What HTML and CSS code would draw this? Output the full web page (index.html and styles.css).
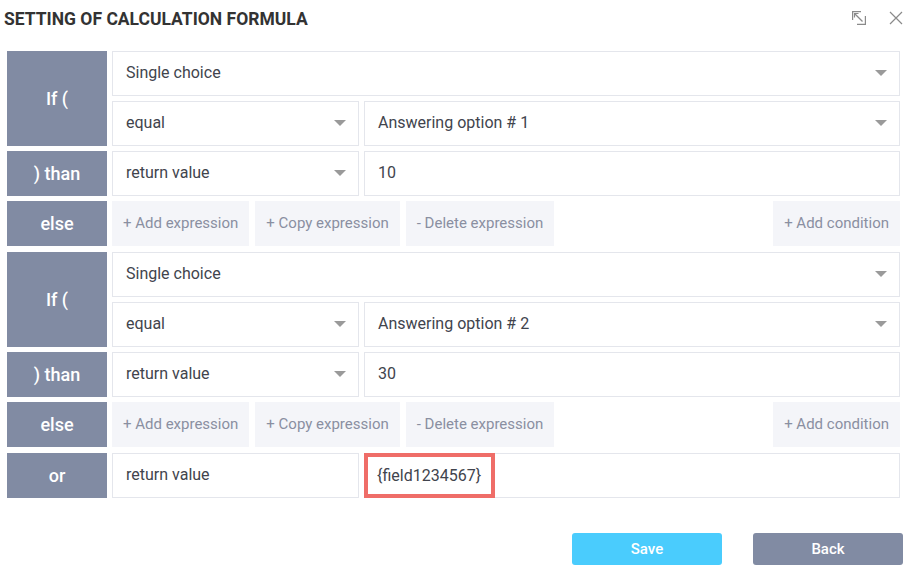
FILE: index.html
```html
<!DOCTYPE html>
<html lang="en">
<head>
    <meta charset="UTF-8">
    <title>Setting of calculation formula</title>
    <link rel="stylesheet" href="styles.css">
</head>
<body>
    <div class="dialog">
        <div class="dialog-header">
            <h1 class="dialog-title">SETTING OF CALCULATION FORMULA</h1>
            <div class="header-tools">
                <svg class="tool-icon" width="14" height="14" viewBox="0 0 14 14" fill="none" stroke="#8a8a8a" stroke-width="1.2">
                    <path d="M0.6 9V0.6H9"/>
                    <path d="M13.4 5V13.4H5"/>
                    <path d="M2.5 2.5L10.5 10.5"/>
                    <path d="M2.5 6.5V2.5H6.5"/>
                </svg>
                <svg class="tool-icon" width="14" height="14" viewBox="0 0 14 14" fill="none" stroke="#8a8a8a" stroke-width="1.2">
                    <path d="M1 1L13 13M13 1L1 13"/>
                </svg>
            </div>
        </div>

        <div class="formula">
            <!-- condition 1 -->
            <div class="group">
                <div class="row">
                    <div class="label tall">If (</div>
                    <div class="fields">
                        <div class="line"><div class="field select">Single choice</div></div>
                        <div class="line">
                            <div class="field select narrow">equal</div>
                            <div class="field select">Answering option # 1</div>
                        </div>
                    </div>
                </div>
                <div class="row">
                    <div class="label">) than</div>
                    <div class="line">
                        <div class="field select narrow">return value</div>
                        <div class="field">10</div>
                    </div>
                </div>
                <div class="row">
                    <div class="label">else</div>
                    <div class="line actions">
                        <div class="action">+ Add expression</div>
                        <div class="action">+ Copy expression</div>
                        <div class="action">- Delete expression</div>
                        <div class="action push">+ Add condition</div>
                    </div>
                </div>
            </div>

            <!-- condition 2 -->
            <div class="group">
                <div class="row">
                    <div class="label tall">If (</div>
                    <div class="fields">
                        <div class="line"><div class="field select">Single choice</div></div>
                        <div class="line">
                            <div class="field select narrow">equal</div>
                            <div class="field select">Answering option # 2</div>
                        </div>
                    </div>
                </div>
                <div class="row">
                    <div class="label">) than</div>
                    <div class="line">
                        <div class="field select narrow">return value</div>
                        <div class="field">30</div>
                    </div>
                </div>
                <div class="row">
                    <div class="label">else</div>
                    <div class="line actions">
                        <div class="action">+ Add expression</div>
                        <div class="action">+ Copy expression</div>
                        <div class="action">- Delete expression</div>
                        <div class="action push">+ Add condition</div>
                    </div>
                </div>
            </div>

            <div class="group">
                <div class="row">
                    <div class="label">or</div>
                    <div class="line">
                        <div class="field narrow">return value</div>
                        <div class="field highlighted">
                            <span class="mark">{field1234567}</span>
                        </div>
                    </div>
                </div>
            </div>
        </div>

        <div class="dialog-footer">
            <button class="btn btn-save">Save</button>
            <button class="btn btn-back">Back</button>
        </div>
    </div>
</body>
</html>
```

FILE: styles.css
```css
body {
    margin: 0;
    font-family: Roboto, "Liberation Sans", Arial, sans-serif;
    background: #ffffff;
    color: #3b3e47;
}

.dialog {
    width: 909px;
    height: 567px;
}

.dialog-header {
    display: flex;
    align-items: center;
    justify-content: space-between;
    height: 37px;
    padding: 0 6px 0 4px;
}

.dialog-title {
    margin: 0;
    font-size: 17.5px;
    font-weight: 700;
    color: #333333;
}

.header-tools {
    display: flex;
    gap: 23px;
    margin-top: -2px;
}

.tool-icon {
    display: block;
}

.formula {
    display: flex;
    flex-direction: column;
    gap: 6px;
    padding: 14px 9px 0 7px;
}

.group {
    display: flex;
    flex-direction: column;
    gap: 5px;
}

.row {
    display: flex;
    gap: 5px;
}

.label {
    flex: 0 0 100px;
    height: 45px;
    display: flex;
    align-items: center;
    justify-content: center;
    background: #818ba3;
    color: #ffffff;
    font-size: 18px;
    font-weight: 500;
}

.label.tall {
    height: 95px;
}

.fields {
    flex: 1;
    display: flex;
    flex-direction: column;
    gap: 5px;
}

.line {
    flex: 1;
    display: flex;
    gap: 5px;
    height: 45px;
}

.line.actions {
    gap: 6px;
}

.field {
    position: relative;
    flex: 1;
    box-sizing: border-box;
    height: 45px;
    display: flex;
    align-items: center;
    padding: 0 0 2px 13px;
    border: 1px solid #e4e6ec;
    background: #ffffff;
    font-size: 16px;
    color: #41444d;
}

.field.narrow {
    flex: 0 0 247px;
}

.select::after {
    content: "";
    position: absolute;
    right: 12px;
    top: 18px;
    border-left: 6px solid transparent;
    border-right: 6px solid transparent;
    border-top: 6px solid #9a9a9a;
}

.field.highlighted {
    padding-left: 0;
}

.mark {
    position: absolute;
    left: -1px;
    top: -1px;
    box-sizing: border-box;
    width: 131px;
    height: 45px;
    display: flex;
    align-items: center;
    padding: 0 0 1px 9px;
    border: 4px solid #ef6d68;
    background: #ffffff;
}

.action {
    display: flex;
    align-items: center;
    padding: 0 11px 2px;
    background: #f4f5f9;
    color: #8a8fa1;
    font-size: 15px;
    white-space: nowrap;
}

.action.push {
    margin-left: auto;
}

.dialog-footer {
    display: flex;
    justify-content: flex-end;
    gap: 31px;
    padding: 35px 6px 0 0;
}

.btn {
    width: 150px;
    height: 32px;
    border: none;
    border-radius: 3px;
    color: #ffffff;
    font-family: Roboto, "Liberation Sans", Arial, sans-serif;
    font-size: 15px;
    font-weight: 500;
    cursor: pointer;
}

.btn-save {
    background: #4accfd;
}

.btn-back {
    background: #818ba3;
}
```
